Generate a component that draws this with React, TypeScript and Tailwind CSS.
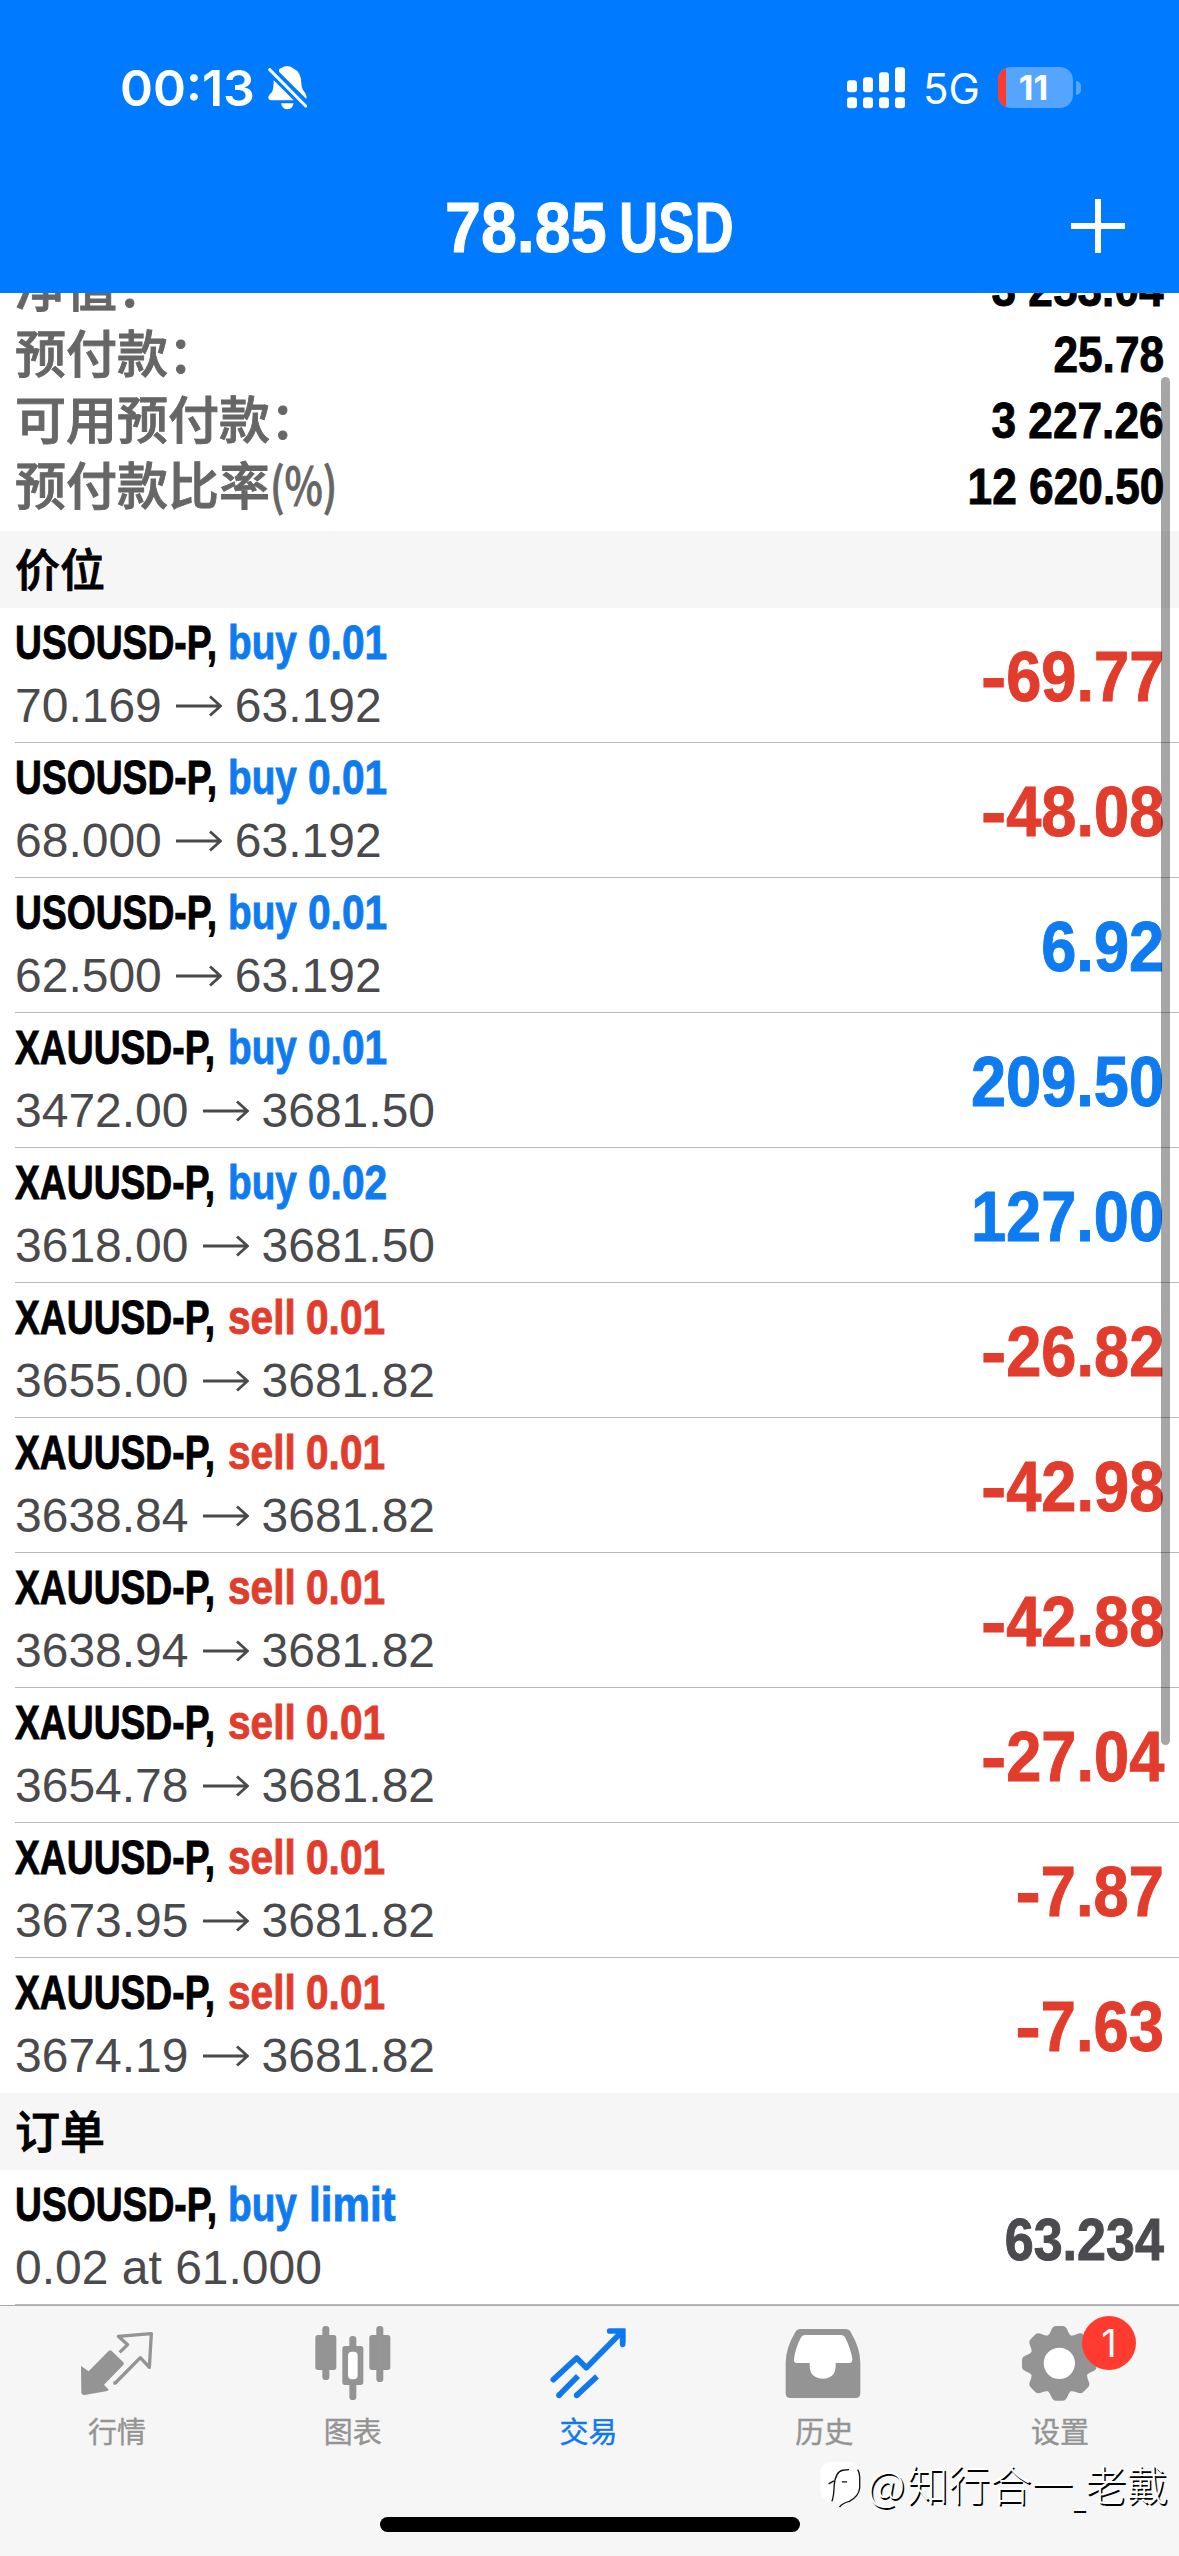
import type { ReactNode } from "react";
import clsx from "clsx";

interface Position {
  symbol: string;
  side: "buy" | "sell";
  volume: string;
  open: string;
  current: string;
  profit: string;
}

const SUMMARY = [
  { label: "净值：", value: "3 253.04" },
  { label: "预付款：", value: "25.78" },
  { label: "可用预付款：", value: "3 227.26" },
  { label: "预付款比率", suffix: "(%)", value: "12 620.50" },
];

const POSITIONS: Position[] = [
  { symbol: "USOUSD-P,", side: "buy", volume: "0.01", open: "70.169", current: "63.192", profit: "-69.77" },
  { symbol: "USOUSD-P,", side: "buy", volume: "0.01", open: "68.000", current: "63.192", profit: "-48.08" },
  { symbol: "USOUSD-P,", side: "buy", volume: "0.01", open: "62.500", current: "63.192", profit: "6.92" },
  { symbol: "XAUUSD-P,", side: "buy", volume: "0.01", open: "3472.00", current: "3681.50", profit: "209.50" },
  { symbol: "XAUUSD-P,", side: "buy", volume: "0.02", open: "3618.00", current: "3681.50", profit: "127.00" },
  { symbol: "XAUUSD-P,", side: "sell", volume: "0.01", open: "3655.00", current: "3681.82", profit: "-26.82" },
  { symbol: "XAUUSD-P,", side: "sell", volume: "0.01", open: "3638.84", current: "3681.82", profit: "-42.98" },
  { symbol: "XAUUSD-P,", side: "sell", volume: "0.01", open: "3638.94", current: "3681.82", profit: "-42.88" },
  { symbol: "XAUUSD-P,", side: "sell", volume: "0.01", open: "3654.78", current: "3681.82", profit: "-27.04" },
  { symbol: "XAUUSD-P,", side: "sell", volume: "0.01", open: "3673.95", current: "3681.82", profit: "-7.87" },
  { symbol: "XAUUSD-P,", side: "sell", volume: "0.01", open: "3674.19", current: "3681.82", profit: "-7.63" },
];

function BellOffIcon() {
  return (
    <svg viewBox="800 197 126 138" className="w-[42px] h-[46px]" fill="#fff">
      <path d="M836 210Q842 206 845 205Q851 200 861 200Q873 201 878 207Q903 218 903 252Q904 270 914 280Q920 288 918 299L836 217Z" />
      <path d="M820 243L880 303H812Q803 302 804 293Q806 286 815 278Q820 270 820 243Z" />
      <path d="M842 312H880Q876 330 861 330Q846 330 842 312Z" />
      <path d="M808 211L916 320" stroke="#fff" strokeWidth="9" strokeLinecap="round" />
    </svg>
  );
}

function SignalIcon() {
  return (
    <svg viewBox="198 200 174 126" className="w-[58px] h-[42px]" fill="#fff">
      <rect x="198" y="240" width="30" height="36" rx="9" />
      <rect x="246" y="231" width="30" height="45" rx="9" />
      <rect x="294" y="216" width="30" height="60" rx="9" />
      <rect x="342" y="201" width="30" height="75" rx="9" />
      <rect x="198" y="291" width="30" height="33" rx="10" />
      <rect x="246" y="291" width="30" height="33" rx="10" />
      <rect x="294" y="291" width="30" height="33" rx="10" />
      <rect x="342" y="291" width="30" height="33" rx="10" />
    </svg>
  );
}

function Battery() {
  return (
    <div className="flex items-center gap-[3px]">
      <div className="relative flex w-[75px] h-[41px] items-center justify-center overflow-hidden rounded-[13px] bg-[#55a5ff]">
        <div className="absolute left-0 top-0 h-full w-[8px] bg-[#ff3b30]" />
        <span className="relative mr-[4px] font-['Inter'] text-[34px] leading-none font-bold text-white">
          11
        </span>
      </div>
      <div className="w-[5px] h-[14px] rounded-r-full bg-[#55a5ff]" />
    </div>
  );
}

function Arrow() {
  return (
    <svg viewBox="0 0 46 22" className="w-[46px] h-[22px]" fill="none" stroke="#4a4a4c" strokeWidth="2.8">
      <path d="M0 11H44M34 1.5L44.5 11L34 20.5" />
    </svg>
  );
}

function QuotesIcon() {
  return (
    <svg viewBox="234 96 240 240" className="size-[80px]" fill="currentColor">
      <path d="M243 228L266 244L325 184Q330 178 336 184L370 217Q374 221 369 226L312 284L326 299Q324 303 318 304L254 315Q244 315 244 306Z" />
      <path
        d="M359 187L383 164L355 139L454 131L448 232L421 203L346 279H340"
        fill="none"
        stroke="currentColor"
        strokeWidth="10"
        strokeLinejoin="round"
      />
    </svg>
  );
}

function ChartIcon() {
  return (
    <svg viewBox="941 96 240 240" className="size-[80px]" fill="currentColor">
      <rect x="945" y="135" width="63" height="105" rx="8" />
      <rect x="966" y="108" width="21" height="162" rx="10" />
      <rect x="1047" y="138" width="21" height="192" rx="10" />
      <rect x="1026" y="168" width="63" height="117" rx="8" />
      <rect x="1043" y="185" width="29" height="83" rx="12" fill="#fff" />
      <rect x="1107" y="135" width="63" height="105" rx="8" />
      <rect x="1128" y="108" width="21" height="168" rx="10" />
    </svg>
  );
}

function TradeIcon() {
  return (
    <svg viewBox="448 96 240 240" className="size-[80px]" fill="none" stroke="currentColor" strokeWidth="17">
      <path d="M461 269L531 204L560 233L666 126" strokeLinecap="round" strokeLinejoin="round" />
      <path d="M630 123H669V163" strokeLinecap="round" />
      <path d="M640 118H677V157Z" fill="currentColor" stroke="none" />
      <path d="M478 316L535 258M531 316L592 259" />
      <circle cx="478" cy="316" r="8.5" fill="currentColor" stroke="none" />
      <circle cx="531" cy="316" r="8.5" fill="currentColor" stroke="none" />
    </svg>
  );
}

function HistoryIcon() {
  return (
    <svg viewBox="76 96 240 240" className="size-[80px]" fill="currentColor">
      <path d="M122 117H258Q268 117 273 126Q302 175 302 218V310Q302 324 288 324H92Q78 324 78 310V218Q78 175 107 126Q112 117 122 117Z" />
      <path
        d="M137 135H243Q253 135 257 144Q273 175 278 207Q279 219 268 219H228V229Q226 266 190 266Q152 266 150 229V219H112Q101 219 103 207Q107 175 123 144Q127 135 137 135Z"
        fill="#fff"
      />
    </svg>
  );
}

const TEETH = [0, 45, 90, 135, 180, 225, 270, 315];

function SettingsIcon() {
  return (
    <svg viewBox="783 96 240 240" className="size-[80px]" fill="currentColor">
      <circle cx="898" cy="220" r="52" fill="#fff" />
      <circle cx="898" cy="220" r="68" fill="none" stroke="currentColor" strokeWidth="42" />
      {TEETH.map((angle) => (
        <path
          key={angle}
          d="M856 146L866 134Q870 130 873 122Q878 108 888 108H908Q918 108 923 122Q926 130 930 134L940 146Z"
          transform={`rotate(${angle} 898 220)`}
        />
      ))}
    </svg>
  );
}

const TABS = [
  { label: "行情", icon: <QuotesIcon /> },
  { label: "图表", icon: <ChartIcon /> },
  { label: "交易", icon: <TradeIcon />, active: true },
  { label: "历史", icon: <HistoryIcon /> },
  { label: "设置", icon: <SettingsIcon />, badge: "1" },
];

function Header() {
  return (
    <header className="h-[293px] shrink-0 bg-[#007aff] text-white">
      <div className="flex h-[175px] items-center justify-between pl-[120px] pr-[98px]">
        <div className="flex items-center gap-[11px]">
          <span className="w-[136px] pt-[1px] font-['Inter'] text-[50px] leading-none font-semibold whitespace-nowrap">
            00:13
          </span>
          <BellOffIcon />
        </div>
        <div className="flex items-center">
          <SignalIcon />
          <span className="ml-[18px] mr-[20px] mt-[3px] w-[55px] font-['Inter'] text-[42px] leading-none whitespace-nowrap">
            5G
          </span>
          <Battery />
        </div>
      </div>
      <div className="grid h-[104px] grid-cols-[1fr_auto_1fr] items-center">
        <h1 className="col-start-2 flex gap-[12px] text-[71px] leading-none font-bold whitespace-nowrap [-webkit-text-stroke:1px]">
          <span className="w-[162px] origin-left scale-x-[0.91]">78.85</span>
          <span className="w-[115px] origin-left scale-x-[0.765]">USD</span>
        </h1>
        <svg viewBox="0 0 54 54" className="mr-[54px] mb-[3px] size-[54px] justify-self-end" stroke="#fff" strokeWidth="6">
          <path d="M27 0V54M0 27H54" />
        </svg>
      </div>
    </header>
  );
}

function SectionTitle({ children }: { children: ReactNode }) {
  return (
    <h2 className="flex h-[77px] items-center bg-[#f6f6f6] pl-[15px] pb-[4px] font-['Noto_Sans_CJK_SC',sans-serif] text-[45px] leading-none font-medium text-black [-webkit-text-stroke:0.8px]">
      {children}
    </h2>
  );
}

interface RowProps {
  symbol: string;
  tag: ReactNode;
  detail: ReactNode;
  value: ReactNode;
}

function Row({ symbol, tag, detail, value }: RowProps) {
  return (
    <div className="ml-[15px] flex h-[135px] items-center justify-between border-b border-[#b9b9bb] pr-[15px]">
      <div className="flex flex-col pb-[2px]">
        <div className="flex h-[63px] items-center text-[49px] leading-none font-bold whitespace-nowrap [-webkit-text-stroke:0.9px]">
          <span className="w-[213px] origin-left scale-x-[0.76] text-black">{symbol}</span>
          {tag}
        </div>
        <div className="flex h-[63px] items-center text-[48px] leading-none text-[#4a4a4c]">
          {detail}
        </div>
      </div>
      {value}
    </div>
  );
}

function Profit({ value }: { value: string }) {
  const negative = value.startsWith("-");

  return (
    <span
      className={clsx(
        "origin-right scale-x-[0.89] pt-[3px] text-[71px] leading-none font-bold [-webkit-text-stroke:1px]",
        negative ? "text-[#e23c2c]" : "text-[#0f7bf0]"
      )}
    >
      {negative && <span className="inline-block origin-right scale-x-[1.2]">-</span>}
      {negative ? value.slice(1) : value}
    </span>
  );
}

function PositionRow({ position }: { position: Position }) {
  const { symbol, side, volume, open, current, profit } = position;

  return (
    <Row
      symbol={symbol}
      tag={
        side === "buy" ? (
          <>
            <span className="w-[80px] origin-left scale-x-[0.79] text-[#0f7bf0]">buy</span>
            <span className="origin-left scale-x-[0.83] text-[#0f7bf0]">{volume}</span>
          </>
        ) : (
          <>
            <span className="w-[78px] origin-left scale-x-[0.83] text-[#e23c2c]">sell</span>
            <span className="origin-left scale-x-[0.83] text-[#e23c2c]">{volume}</span>
          </>
        )
      }
      detail={
        <>
          <span className="mr-[14px]">{open}</span>
          <Arrow />
          <span className="ml-[13px]">{current}</span>
        </>
      }
      value={<Profit value={profit} />}
    />
  );
}

function TabBar() {
  return (
    <nav className="relative h-[251px] shrink-0 border-t border-[#a9a9ad] bg-[#f6f6f6]">
      <ul className="grid grid-cols-5 pt-[16px]">
        {TABS.map((tab) => (
          <li
            key={tab.label}
            className={clsx(
              "flex flex-col items-center",
              tab.active ? "text-[#0f78ee]" : "text-[#949494]"
            )}
          >
            <div className="relative">
              {tab.icon}
              {tab.badge && (
                <span className="absolute left-[61px] -top-[6px] flex size-[54px] items-center justify-center rounded-full bg-[#ff3b30] font-['Inter'] text-[38px] leading-none text-white">
                  {tab.badge}
                </span>
              )}
            </div>
            <span className="mt-[13px] mr-[2px] font-['Noto_Sans_CJK_SC',sans-serif] text-[29px] leading-[30px] [-webkit-text-stroke:0.4px]">
              {tab.label}
            </span>
          </li>
        ))}
      </ul>
      <div className="absolute left-[380px] bottom-[24px] h-[15px] w-[420px] rounded-full bg-black" />
      <Watermark />
    </nav>
  );
}

function Watermark() {
  return (
    <div className="absolute right-[11px] bottom-[47px] flex h-[50px] items-center text-white">
      <svg viewBox="184 534 128 142" className="mr-[5px] w-[43px] h-[47px]">
        <path
          d="M222 537H275Q306 537 306 575V615Q304 640 285 655L247 672L250 657H222Q187 655 187 620V572Q187 537 222 537Z"
          fill="#fff"
        />
        <path
          d="M300 560Q306 570 306 582V615Q304 640 275 656Q256 660 245 673M212 603L228 594M222 656Q228 640 229 607Q233 566 255 562L274 560M252 597H268"
          fill="none"
          stroke="#111"
          strokeWidth="4"
        />
      </svg>
      <span className="flex font-['Noto_Sans_CJK_SC',sans-serif] text-[41.5px] leading-none font-light whitespace-nowrap [text-shadow:1.5px_1.5px_0_#000]">
        <span className="mr-[2px]">@</span>
        知行合一
        <span className="w-[12px] translate-y-[4px] origin-left scale-x-[0.55]">_</span>
        老戴
      </span>
    </div>
  );
}

export default function App() {
  return (
    <div className="relative flex h-[2556px] w-[1179px] flex-col overflow-hidden bg-white font-['Liberation_Sans',Arial,sans-serif]">
      <Header />
      <main className="h-[2012px] shrink-0 overflow-hidden">
        <div className="flex h-[238px] flex-col justify-end overflow-hidden px-[15px] pb-[12px]">
          {SUMMARY.map((item) => (
            <div key={item.label} className="flex h-[66px] shrink-0 items-center justify-between">
              <span className="flex pb-[5px] font-['Noto_Sans_CJK_SC',sans-serif] text-[51px] leading-none font-medium whitespace-nowrap text-[#666] [-webkit-text-stroke:0.9px]">
                {item.label}
                {item.suffix && (
                  <span className="origin-left scale-x-[0.8]">{item.suffix}</span>
                )}
              </span>
              <span className="origin-right scale-x-[0.885] pt-[2px] text-[50px] leading-none font-bold text-black [-webkit-text-stroke:0.9px]">
                {item.value}
              </span>
            </div>
          ))}
        </div>
        <SectionTitle>价位</SectionTitle>
        <div className="h-[1485px] overflow-hidden [&>*:last-child]:border-transparent">
          {POSITIONS.map((position, index) => (
            <PositionRow key={index} position={position} />
          ))}
        </div>
        <SectionTitle>订单</SectionTitle>
        <Row
          symbol="USOUSD-P,"
          tag={
            <>
              <span className="w-[81px] origin-left scale-x-[0.79] text-[#0f7bf0]">buy</span>
              <span className="origin-left scale-x-[0.86] text-[#0f7bf0]">limit</span>
            </>
          }
          detail="0.02 at 61.000"
          value={
            <span className="origin-right scale-x-[0.89] pt-[6px] text-[58.5px] leading-none font-bold text-[#4a4a4f] [-webkit-text-stroke:1px]">
              63.234
            </span>
          }
        />
      </main>
      <TabBar />
      <div className="absolute right-[9px] top-[377px] h-[1368px] w-[9px] rounded-full bg-black/35" />
    </div>
  );
}
